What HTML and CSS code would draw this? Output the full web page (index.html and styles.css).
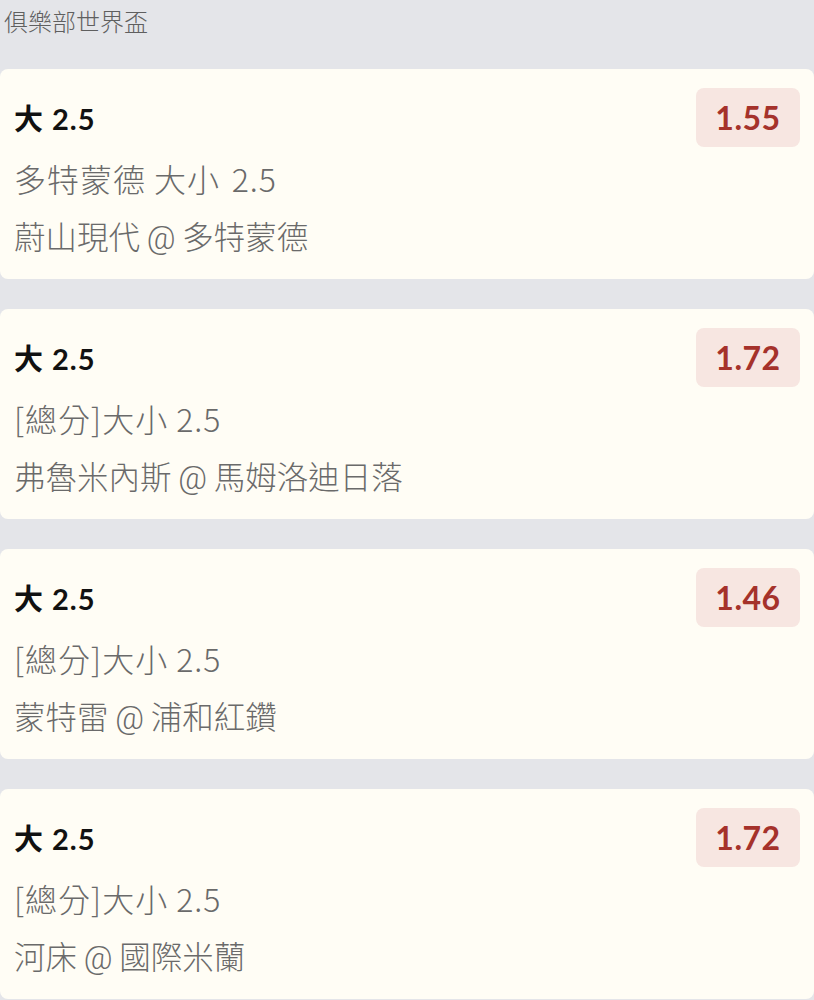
FILE: index.html
```html
<!DOCTYPE HTML>
<html lang="zh-Hant">
<head>
<meta name="viewport" content="width=device-width, initial-scale=1">
<title>俱樂部世界盃</title>
<link rel="stylesheet" href="styles.css">
</head>
<body>

<div class="league">俱樂部世界盃</div>

<div class="bet-list">
  <div class="bet-card">
    <div class="bet-info">
      <div class="bet-pick">大 2.5</div>
      <div class="bet-market">多特蒙德 大小&#8196;2.5</div>
      <div class="bet-match">蔚山現代 @ 多特蒙德</div>
    </div>
    <div class="bet-odds">1.55</div>
  </div>

  <div class="bet-card">
    <div class="bet-info">
      <div class="bet-pick">大 2.5</div>
      <div class="bet-market">[總分]大小 2.5</div>
      <div class="bet-match">弗魯米內斯 @ 馬姆洛迪日落</div>
    </div>
    <div class="bet-odds">1.72</div>
  </div>

  <div class="bet-card">
    <div class="bet-info">
      <div class="bet-pick">大 2.5</div>
      <div class="bet-market">[總分]大小 2.5</div>
      <div class="bet-match">蒙特雷 @ 浦和紅鑽</div>
    </div>
    <div class="bet-odds">1.46</div>
  </div>

  <div class="bet-card">
    <div class="bet-info">
      <div class="bet-pick">大 2.5</div>
      <div class="bet-market">[總分]大小 2.5</div>
      <div class="bet-match">河床 @ 國際米蘭</div>
    </div>
    <div class="bet-odds">1.72</div>
  </div>
</div>

</body>
</html>
```

FILE: styles.css
```css
/* Page */
body {
  margin: 0;
  padding: 0;
  background: #e4e5e9;
  font-family: Roboto, "Noto Sans CJK TC", sans-serif;
}

/* League header */
.league {
  padding: 2px 4px 0 4px;
  line-height: 42px;
  font-size: 24px;
  font-weight: 300;
  color: #5f5f5f;
  margin-bottom: 25px;
}

/* Bet cards */
.bet-list {
  display: flex;
  flex-direction: column;
  gap: 30px;
}

.bet-card {
  display: flex;
  justify-content: space-between;
  align-items: flex-start;
  height: 210px;
  box-sizing: border-box;
  padding: 19px 14px 0 14px;
  background: #fffdf5;
  border-radius: 8px;
}

.bet-pick {
  font-family: Lato, "Noto Sans CJK TC", sans-serif;
  font-weight: bold;
  font-size: 29px;
  letter-spacing: 1px;
  line-height: 62px;
  color: #111111;
}

.bet-market,
.bet-match {
  font-family: "Noto Sans CJK TC", sans-serif;
  font-size: 32px;
  font-weight: 300;
  letter-spacing: 1px;
  line-height: 57px;
  color: #6a6a6a;
}

/* team names: narrower Roboto "@" between the two sides */
.bet-match {
  font-family: Roboto, "Noto Sans CJK TC", sans-serif;
  font-size: 31.5px;
  letter-spacing: 0;
  word-spacing: -1px;
  padding-top: 3px;
}

/* Odds badge */
.bet-odds {
  width: 104px;
  height: 59px;
  line-height: 59px;
  text-align: center;
  background: #f7e6e1;
  border-radius: 8px;
  font-family: Lato, sans-serif;
  font-weight: bold;
  font-size: 32px;
  letter-spacing: 0.5px;
  color: #a5322b;
}
```
